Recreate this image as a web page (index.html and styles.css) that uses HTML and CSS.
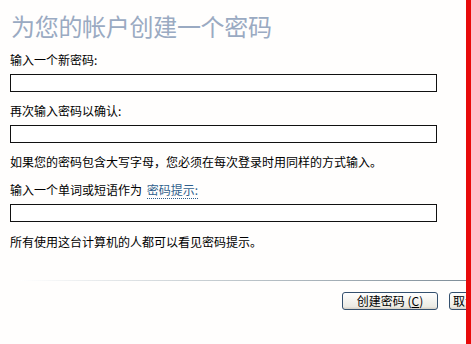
FILE: index.html
```html
<!DOCTYPE html>
<html lang="zh-CN">
<head>
  <meta charset="UTF-8">
  <title>为您的帐户创建一个密码</title>
  <link rel="stylesheet" href="styles.css">
</head>
<body>
  <div class="window">
    <div class="content">
      <h1 class="title">为您的帐户创建一个密码</h1>

      <label class="field-label">输入一个新密码:</label>
      <input class="field" type="password">

      <label class="field-label second">再次输入密码以确认:</label>
      <input class="field" type="password">

      <p class="note">如果您的密码包含大写字母，您必须在每次登录时用同样的方式输入。</p>

      <label class="field-label hint-label">输入一个单词或短语作为 <a class="hint-link" href="#">密码提示:</a></label>
      <input class="field" type="text">

      <p class="note last">所有使用这台计算机的人都可以看见密码提示。</p>

      <div class="separator"></div>

      <div class="buttons">
        <button class="btn">创建密码 (<u>C</u>)</button>
        <button class="btn cancel">取消</button>
      </div>
    </div>
    <div class="edge"></div>
  </div>
</body>
</html>
```

FILE: styles.css
```css
body {
  margin: 0;
  padding: 0;
  background: #fff;
  font-family: "Noto Sans CJK SC", "DejaVu Sans", sans-serif;
  font-size: 12px;
  color: #000;
}

.window {
  display: flex;
  width: 471px;
  height: 344px;
  overflow: hidden;
}

.content {
  flex: 1;
  display: flex;
  flex-direction: column;
  padding-left: 10px;
  overflow: hidden;
  background: #fffefd;
}

.edge {
  width: 5px;
  background: #e80a0a;
}

.title {
  margin: 12px 0 0 1px;
  font-size: 24px;
  line-height: 28px;
  font-weight: normal;
  color: #9aaac2;
  letter-spacing: -0.3px;
}

.field-label {
  display: block;
  margin-top: 12px;
  line-height: 16px;
}

.field-label.second {
  margin-top: 11px;
}

.field {
  box-sizing: border-box;
  width: 427px;
  height: 18px;
  margin: 6px 0 0;
  padding: 0 3px;
  border: 1px solid #111;
  background: #fff;
  font: inherit;
}

.note {
  margin: 11px 0 0;
  line-height: 16px;
}

.hint-label {
  margin-top: 12px;
}

.hint-link {
  color: #2f5f8c;
  text-decoration: none;
  border-bottom: 1px dotted #2f5f8c;
  margin-left: 2px;
}

.note.last {
  margin-top: 12px;
}

.separator {
  height: 1px;
  margin: 30px 0 0 10px;
  background: linear-gradient(to right, #ffffff, #c9d0d4 40%, #7f8e99);
}

.buttons {
  display: flex;
  justify-content: flex-end;
  gap: 11px;
  margin-top: 11px;
  margin-right: -58px;
}

.btn {
  height: 18px;
  min-width: 96px;
  padding: 0 6px;
  border: 1px solid #34506e;
  border-radius: 3px;
  background: linear-gradient(#ffffff, #eceae3 85%, #d6d0c5);
  font: inherit;
  font-size: 12px;
  line-height: 14px;
  color: #000;
}

.btn.cancel {
  min-width: 75px;
  padding: 0 3px;
  text-align: left;
}

.btn u {
  text-underline-offset: 1px;
}
```
